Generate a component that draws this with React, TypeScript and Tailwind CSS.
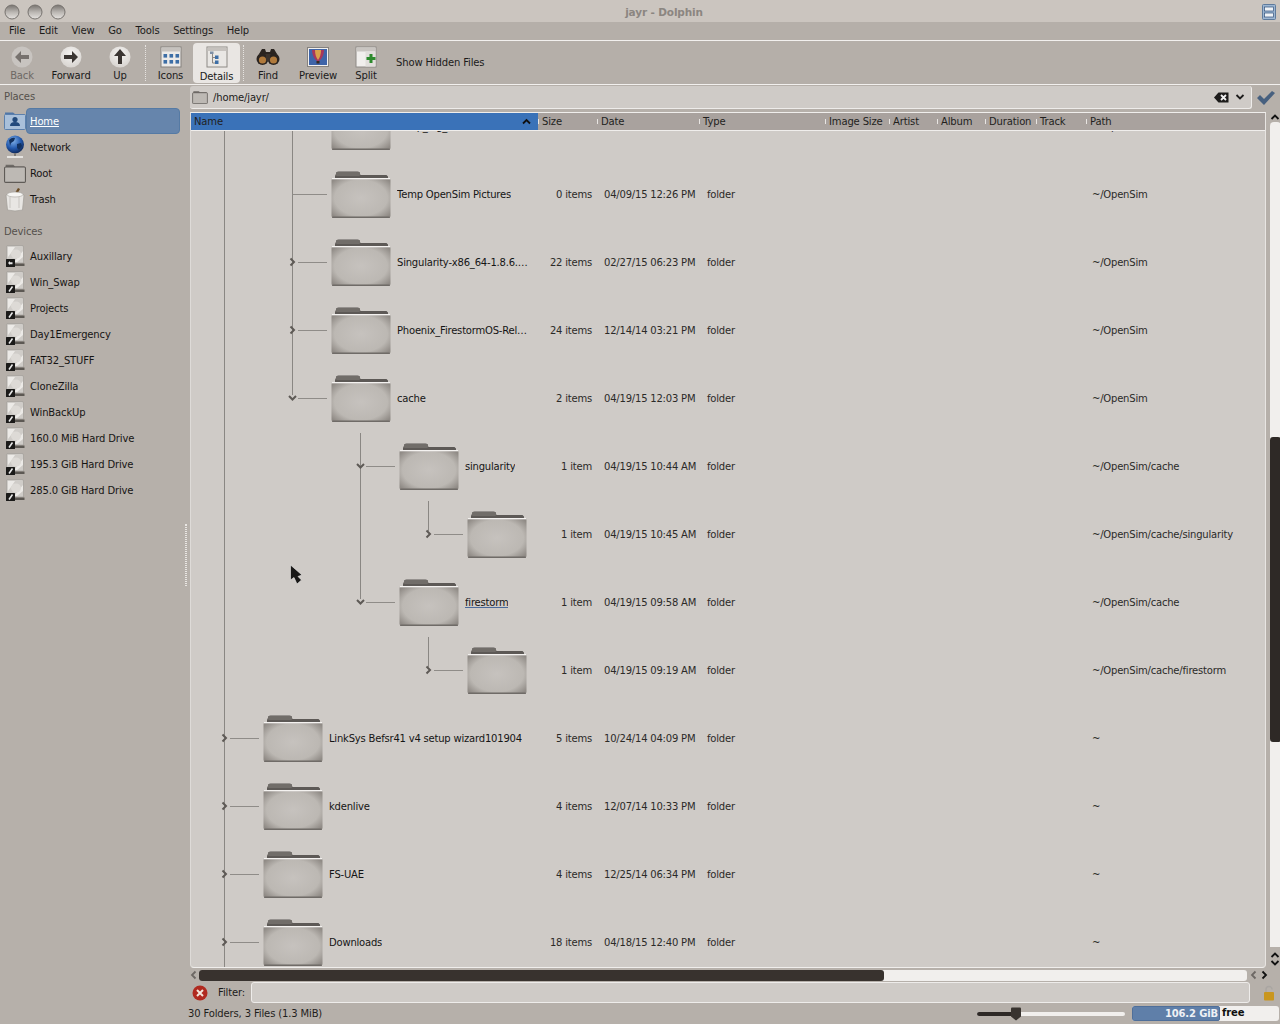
import React from "react";

type Cell = "none" | "line" | "tee" | "teeClosed" | "teeOpen" | "lastClosed" | "lastOpen";

function Chevron({ kind, x, y }: { kind: "right" | "down"; x: number; y: number }) {
  const d = kind === "right" ? `M${x - 2} ${y - 3.5}l3.5 3.5l-3.5 3.5` : `M${x - 3.5} ${y - 2}l3.5 3.5l3.5 -3.5`;
  return <path d={d} fill="none" stroke="#5e5a56" strokeWidth="2" />;
}

function TreeCell({ kind }: { kind: Cell }) {
  const full = kind === "line" || kind === "tee" || kind === "teeClosed" || kind === "teeOpen";
  const half = kind === "lastClosed" || kind === "lastOpen";
  const hasArm = kind !== "none" && kind !== "line";
  const hasChev = kind === "teeClosed" || kind === "teeOpen" || kind === "lastClosed" || kind === "lastOpen";
  const open = kind === "teeOpen" || kind === "lastOpen";
  return (
    <svg width="68" height="68" viewBox="0 0 68 68" className="shrink-0">
      {full && <line x1="33.5" y1="0" x2="33.5" y2="68" stroke="#8a8783" />}
      {half && <line x1="33.5" y1="0" x2="33.5" y2="30" stroke="#8a8783" />}
      {hasArm && <line x1={hasChev ? 39 : 33.5} y1="33.5" x2="68" y2="33.5" stroke="#8f8c88" />}
      {hasChev && <Chevron kind={open ? "down" : "right"} x={33.5} y={33} />}
    </svg>
  );
}

function Folder() {
  return (
    <svg width="60" height="48" viewBox="0 0 60 48" className="ml-[4px] shrink-0">
      <defs>
        <radialGradient id="fbody" cx="50%" cy="50%" r="64%">
          <stop offset="0" stopColor="#c6c2be" />
          <stop offset="0.7" stopColor="#bcb8b3" />
          <stop offset="1" stopColor="#908b86" />
        </radialGradient>
      </defs>
      <path d="M4 5l1.5-3.5q.5-1 2-1h19q1.5 0 2 1l1 2.5h26l1.5 1.5v4h-53z" fill="#5d5956" />
      <rect x="5" y="1" width="24" height="4" rx="1" fill="#716d69" />
      <rect x="0.5" y="7" width="59" height="40" rx="2.5" fill="url(#fbody)" />
      <rect x="1" y="7" width="58" height="1.3" fill="#f4f2f0" />
      <rect x="1" y="45.5" width="58" height="1.5" rx="0.7" fill="#6f6b67" />
    </svg>
  );
}

const rows: { cells: Cell[]; name: string; size: string; date: string; path: string; hover?: boolean }[] = [
  { cells: ["line", "tee"], name: "Temp_log_Pics", size: "3 items", date: "04/09/15 12:24 PM", path: "~/OpenSim" },
  { cells: ["line", "tee"], name: "Temp OpenSim Pictures", size: "0 items", date: "04/09/15 12:26 PM", path: "~/OpenSim" },
  { cells: ["line", "teeClosed"], name: "Singularity-x86_64-1.8.6.6157", size: "22 items", date: "02/27/15 06:23 PM", path: "~/OpenSim" },
  { cells: ["line", "teeClosed"], name: "Phoenix_FirestormOS-Releasex86", size: "24 items", date: "12/14/14 03:21 PM", path: "~/OpenSim" },
  { cells: ["line", "lastOpen"], name: "cache", size: "2 items", date: "04/19/15 12:03 PM", path: "~/OpenSim" },
  { cells: ["line", "none", "teeOpen"], name: "singularity", size: "1 item", date: "04/19/15 10:44 AM", path: "~/OpenSim/cache" },
  { cells: ["line", "none", "line", "lastClosed"], name: "", size: "1 item", date: "04/19/15 10:45 AM", path: "~/OpenSim/cache/singularity" },
  { cells: ["line", "none", "lastOpen"], name: "firestorm", size: "1 item", date: "04/19/15 09:58 AM", path: "~/OpenSim/cache", hover: true },
  { cells: ["line", "none", "none", "lastClosed"], name: "", size: "1 item", date: "04/19/15 09:19 AM", path: "~/OpenSim/cache/firestorm" },
  { cells: ["teeClosed"], name: "LinkSys Befsr41 v4 setup wizard101904", size: "5 items", date: "10/24/14 04:09 PM", path: "~" },
  { cells: ["teeClosed"], name: "kdenlive", size: "4 items", date: "12/07/14 10:33 PM", path: "~" },
  { cells: ["teeClosed"], name: "FS-UAE", size: "4 items", date: "12/25/14 06:34 PM", path: "~" },
  { cells: ["teeClosed"], name: "Downloads", size: "18 items", date: "04/18/15 12:40 PM", path: "~" },
];

function Row({ r, first }: { r: (typeof rows)[number]; first?: boolean }) {
  return (
    <div className={`flex h-[68px] shrink-0 items-center tracking-[-0.2px] text-[#2b2a28] ${first ? "-mt-[38px]" : ""}`}>
      <div className="flex h-full w-[346px] shrink-0 items-center overflow-hidden pr-[8px]">
        {r.cells.map((c, i) => (
          <TreeCell key={i} kind={c} />
        ))}
        <Folder />
        <span
          className={`ml-[6px] truncate text-[#151515] ${r.hover ? "underline decoration-[#4a6a9a]" : ""}`}
        >
          {r.name}
        </span>
      </div>
      <div className="w-[58px] shrink-0 pr-[3px] text-right">{r.size}</div>
      <div className="w-[108px] shrink-0 pl-[9px] whitespace-nowrap">{r.date}</div>
      <div className="w-[385px] shrink-0 pl-[4px]">folder</div>
      <div className="pl-[4px] whitespace-nowrap">{r.path}</div>
    </div>
  );
}

function RoundBtn({ dim, d }: { dim?: boolean; d: string }) {
  return (
    <svg width="24" height="24" viewBox="0 0 24 24">
      <defs>
        <radialGradient id="rb" cx="50%" cy="35%" r="70%">
          <stop offset="0" stopColor="#f4f3f1" />
          <stop offset="1" stopColor="#d6d2ce" />
        </radialGradient>
      </defs>
      <circle cx="12" cy="12" r="10.5" fill={dim ? "#c8c4c0" : "url(#rb)"} />
      <path d={d} fill={dim ? "#77726e" : "#3a3532"} />
    </svg>
  );
}

function IconsIcon() {
  return (
    <svg width="24" height="24" viewBox="0 0 24 24">
      <rect x="2" y="2" width="20" height="20" fill="#eceae8" stroke="#86827e" />
      <rect x="2.5" y="2.5" width="19" height="4" fill="#c6c2be" />
      {[4.5, 10.5, 16.5].map((x) =>
        [9, 15].map((y) => <rect key={`${x}${y}`} x={x} y={y} width="3.6" height="3.6" fill="#3c6ea6" />)
      )}
    </svg>
  );
}

function DetailsIcon() {
  return (
    <svg width="24" height="24" viewBox="0 0 24 24">
      <rect x="2" y="2" width="20" height="20" fill="#e9e7e4" stroke="#8e8a86" />
      <rect x="2.5" y="2.5" width="19" height="3.5" fill="#c6c2be" />
      <path d="M7.5 8v10h3M7.5 12.5h3" fill="none" stroke="#8a8682" />
      <rect x="10" y="10.5" width="3.5" height="3.5" fill="#3c6ea6" />
      <rect x="10" y="15.5" width="3.5" height="3.5" fill="#3c6ea6" />
      <rect x="5" y="6.5" width="3.5" height="2.5" fill="#7d8fa5" />
    </svg>
  );
}

function FindIcon() {
  return (
    <svg width="24" height="24" viewBox="0 0 24 24">
      <path d="M3 9l3-5h3l1 3h4l1-3h3l3 5z" fill="#2a2420" />
      <circle cx="6.5" cy="14" r="6" fill="#2a2420" />
      <circle cx="17.5" cy="14" r="6" fill="#2a2420" />
      <circle cx="6.5" cy="15" r="3.6" fill="#b07a3c" />
      <circle cx="17.5" cy="15" r="3.6" fill="#b07a3c" />
      <rect x="10" y="9" width="4" height="7" fill="#3a322c" />
    </svg>
  );
}

function PreviewIcon() {
  return (
    <svg width="22" height="20" viewBox="0 0 22 20" className="mb-[2px]">
      <rect x="0.5" y="0.5" width="21" height="19" fill="#f2f0ee" stroke="#85817d" />
      <rect x="2" y="2" width="18" height="16" fill="#3f64a8" />
      <path d="M5 3h12q0 7-5 11h-2q-5-4-5-11z" fill="#a8375c" />
      <path d="M8 3h6q0 6-3 10q-3-4-3-10z" fill="#d9a24a" />
      <rect x="9.5" y="14" width="3" height="2.5" fill="#3a2a20" />
    </svg>
  );
}

function SplitIcon() {
  return (
    <svg width="24" height="24" viewBox="0 0 24 24">
      <rect x="2" y="2" width="20" height="20" fill="#f1efed" stroke="#8e8a86" />
      <rect x="2.5" y="2.5" width="19" height="4" fill="#c9c5c1" />
      <rect x="11.5" y="6.5" width="10" height="15" fill="#e2dfdc" />
      <path d="M15.5 9h3v3h3v3h-3v3h-3v-3h-3v-3h3z" fill="#2d8a2d" />
    </svg>
  );
}

function Tool({ w, label, active, dim, children }: { w: string; label: string; active?: boolean; dim?: boolean; children: React.ReactNode }) {
  return (
    <div
      className={`flex h-[40px] shrink-0 flex-col items-center justify-start rounded-[4px] ${w} ${active ? "bg-[#e9e6e3]" : ""}`}
    >
      <div className="flex h-[26px] items-end">{children}</div>
      <div className={`leading-[13px] ${dim ? "text-[#6d6864]" : "text-[#1a1a1a]"} ${active ? "mt-[1px]" : ""}`}>{label}</div>
    </div>
  );
}

function Sep({ className }: { className: string }) {
  return <div className={`h-[36px] w-0 shrink-0 border-l border-dotted border-[#e6e3e0] ${className}`} />;
}

function Drive({ mark }: { mark: "arrow" | "slash" }) {
  return (
    <svg width="22" height="24" viewBox="0 0 22 24">
      <path d="M4 1.5h14q1.5 0 1.5 1.5v16h-17V3q0-1.5 1.5-1.5z" fill="#cfccc8" stroke="#9c9893" strokeWidth="0.6" />
      <path d="M4 3l7 0l-4 6l-3 4zM19 7l0 6l-6 5l-3 0z" fill="#eceae7" />
      <ellipse cx="12" cy="10" rx="5" ry="4.5" fill="#dddad6" />
      <path d="M2 19.5h18.5v2.5H2z" fill="#5c5853" />
      <rect x="2" y="15" width="9" height="8" rx="0.5" fill="#1b1a19" />
      {mark === "arrow" ? (
        <path d="M4 19l2-2v1.2h2.5v2H6V21z" fill="#e8e8e8" />
      ) : (
        <path d="M5 21.5l3.5-5" stroke="#e8e8e8" strokeWidth="1.6" />
      )}
    </svg>
  );
}

function SmallFolder({ w = 20, h = 18 }: { w?: number; h?: number }) {
  return (
    <svg width={w} height={h} viewBox="0 0 20 18">
      <path d="M1.5 3V1.5h7L10 3h8.5v3h-17z" fill="#6e6a66" />
      <rect x="0.5" y="3.5" width="19" height="14" rx="1" fill="#bdb9b4" stroke="#5f5b57" />
    </svg>
  );
}

function HomeIcon() {
  return (
    <svg width="22" height="20" viewBox="0 0 22 20">
      <path d="M1 3V1.5h8L11 3h10v4H1z" fill="#4f76a8" />
      <rect x="0.5" y="3.5" width="21" height="15" rx="1" fill="#a9c0da" stroke="#5c80ac" />
      <circle cx="11" cy="8.5" r="2.6" fill="#234a7c" />
      <path d="M6 15q0-4 5-4t5 4z" fill="#234a7c" />
    </svg>
  );
}

function GlobeIcon() {
  return (
    <svg width="20" height="24" viewBox="0 0 20 24">
      <defs>
        <radialGradient id="gl" cx="40%" cy="30%" r="70%">
          <stop offset="0" stopColor="#7fb0e8" />
          <stop offset="0.6" stopColor="#2359ad" />
          <stop offset="1" stopColor="#102a5c" />
        </radialGradient>
      </defs>
      <circle cx="10" cy="9.5" r="9" fill="url(#gl)" />
      <path d="M4 5q3-3 6-2l-1 3l-3 2l-1 3zM12 9l4-1l1 3l-3 4l-2-2z" fill="#12315f" />
      <rect x="9" y="18" width="2" height="3" fill="#7f7b77" />
      <rect x="2" y="21" width="16" height="2" fill="#e5e3e0" />
    </svg>
  );
}

function TrashIcon() {
  return (
    <svg width="20" height="26" viewBox="0 0 20 26">
      <path d="M8 10L13 2l2 1l-4 7z" fill="#6a4a22" />
      <path d="M1 9q9-4 18 0l-1.5 15q-7.5 2-15 0z" fill="#e8e6e3" stroke="#a09c97" strokeWidth="0.7" />
      <path d="M5 11v11M14 11v11" stroke="#c8c5c1" />
      <ellipse cx="10" cy="8.5" rx="8" ry="2.5" fill="#f6f5f3" stroke="#a5a19c" strokeWidth="0.6" />
    </svg>
  );
}

function PlaceRow({ icon, label, active }: { icon: React.ReactNode; label: string; active?: boolean }) {
  return (
    <div className="flex h-[26px] items-center pl-[4px]">
      <div className="flex w-[22px] shrink-0 items-center justify-center">{icon}</div>
      <div
        className={`flex h-[26px] w-[154px] items-center pt-[1px] ${
          active ? "rounded-[4px] border border-[#557aa4] bg-[#6685ac] pl-[3px] text-white underline" : "pl-[4px] text-[#161514]"
        }`}
      >
        {label}
      </div>
    </div>
  );
}

const places = [
  { label: "Home", icon: <HomeIcon />, active: true },
  { label: "Network", icon: <GlobeIcon /> },
  { label: "Root", icon: <SmallFolder w={22} h={20} /> },
  { label: "Trash", icon: <TrashIcon /> },
];
const devices: [string, "arrow" | "slash"][] = [
  ["Auxillary", "arrow"],
  ["Win_Swap", "slash"],
  ["Projects", "slash"],
  ["Day1Emergency", "slash"],
  ["FAT32_STUFF", "slash"],
  ["CloneZilla", "slash"],
  ["WinBackUp", "slash"],
  ["160.0 MiB Hard Drive", "slash"],
  ["195.3 GiB Hard Drive", "slash"],
  ["285.0 GiB Hard Drive", "slash"],
];

const cols: [string, string][] = [
  ["Size", "w-[59px]"],
  ["Date", "w-[102px]"],
  ["Type", "w-[126px]"],
  ["Image Size", "w-[64px]"],
  ["Artist", "w-[48px]"],
  ["Album", "w-[48px]"],
  ["Duration", "w-[51px]"],
  ["Track", "w-[50px]"],
  ["Path", "flex-1"],
];

function WinBtn() {
  return (
    <svg width="16" height="16" viewBox="0 0 16 16">
      <defs>
        <linearGradient id="wb" x1="0" y1="0" x2="0" y2="1">
          <stop offset="0" stopColor="#77736f" />
          <stop offset="0.5" stopColor="#b9b5b1" />
          <stop offset="1" stopColor="#e6e3e0" />
        </linearGradient>
      </defs>
      <circle cx="8" cy="8" r="7" fill="url(#wb)" stroke="#76726e" />
    </svg>
  );
}

export default function App() {
  return (
    <div
      className="relative flex h-[1024px] w-[1280px] flex-col overflow-hidden bg-[#b6b0aa] text-[10px] leading-[14px] tracking-[-0.14px] text-[#1c1b1a]"
      style={{ fontFamily: '"DejaVu Sans", sans-serif' }}
    >
      {/* title bar */}
      <div className="flex h-[22px] shrink-0 items-center bg-[#cbc5bf] pt-[2px] pl-[4px]">
        <div className="flex w-[66px] gap-[7px]">
          <WinBtn />
          <WinBtn />
          <WinBtn />
        </div>
        <div className="flex-1 text-center text-[10.5px] font-bold text-[#8b8681]">jayr - Dolphin</div>
        <div className="flex w-[22px] justify-center">
          <svg width="14" height="16" viewBox="0 0 14 16">
            <rect x="0.5" y="0.5" width="13" height="15" rx="1" fill="#9db6d2" stroke="#5d7a9c" />
            <rect x="2.5" y="3" width="9" height="4" fill="#eef2f6" stroke="#2f4f78" strokeWidth="0.7" />
            <rect x="2.5" y="9" width="9" height="4" fill="#eef2f6" stroke="#2f4f78" strokeWidth="0.7" />
          </svg>
        </div>
      </div>
      {/* menu */}
      <div className="flex h-[18px] shrink-0 items-center gap-[13.7px] bg-[#b5afa9] pl-[9px] text-[#1c1b1a]">
        {["File", "Edit", "View", "Go", "Tools", "Settings", "Help"].map((m) => (
          <span key={m}>{m}</span>
        ))}
      </div>
      {/* toolbar */}
      <div className="flex h-[45px] shrink-0 items-center border-y border-[#f2f0ee] bg-[#b5afa9] pt-[1px]">
        <Tool w="w-[44px]" label="Back" dim>
          <RoundBtn dim d="M5 12l6-6v4h8v4h-8v4z" />
        </Tool>
        <Tool w="w-[54px]" label="Forward">
          <RoundBtn d="M19 12l-6-6v4H5v4h8v4z" />
        </Tool>
        <Tool w="w-[44px]" label="Up">
          <RoundBtn d="M12 4l6 7h-4v8h-4v-8H6z" />
        </Tool>
        <Sep className="ml-[3px] mr-[2px]" />
        <Tool w="w-[45px]" label="Icons">
          <IconsIcon />
        </Tool>
        <Tool w="w-[47px]" label="Details" active>
          <DetailsIcon />
        </Tool>
        <Sep className="ml-[3px] mr-[4px]" />
        <Tool w="w-[40px]" label="Find">
          <FindIcon />
        </Tool>
        <Tool w="w-[60px]" label="Preview">
          <PreviewIcon />
        </Tool>
        <Tool w="w-[36px]" label="Split">
          <SplitIcon />
        </Tool>
        <div className="ml-[12px]">Show Hidden Files</div>
      </div>
      {/* main */}
      <div className="flex min-h-0 flex-1">
        <div className="w-[184px] shrink-0">
          <div className="flex h-[23px] items-center pl-[4px] text-[#55504c]">Places</div>
          {places.map((p) => (
            <PlaceRow key={p.label} {...p} />
          ))}
          <div className="mt-[8px] flex h-[23px] items-center pl-[4px] text-[#55504c]">Devices</div>
          {devices.map(([label, mark]) => (
            <PlaceRow key={label} label={label} icon={<Drive mark={mark} />} />
          ))}
        </div>
        <div className="flex w-[4px] shrink-0 items-center justify-center">
          <div className="h-[62px] w-[2px] border-x border-dotted border-[#e9e6e3]" />
        </div>
        <div className="flex min-w-0 flex-1 flex-col">
          {/* location */}
          <div className="flex h-[25px] shrink-0 items-center pl-[2px]">
            <div className="flex h-[23px] w-[1062px] items-center rounded-[3px] border-r border-b border-[#eeecea] bg-[#cfcbc7] pl-[2px] pr-[6px]">
              <SmallFolder w={16} h={14} />
              <span className="ml-[5px] flex-1 pt-[1px]">/home/jayr/</span>
              <svg width="15" height="11" viewBox="0 0 15 11">
                <path d="M0 5.5L4.5 0.5H14.5V10.5H4.5z" fill="#1d1c1b" />
                <path d="M7 3l5 5M12 3l-5 5" stroke="#f0f0f0" strokeWidth="1.8" />
              </svg>
              <svg width="10" height="8" viewBox="0 0 10 8" className="ml-[6px]">
                <path d="M1.5 2L5 5.5L8.5 2" fill="none" stroke="#1d1c1b" strokeWidth="1.8" />
              </svg>
            </div>
            <svg width="20" height="16" viewBox="0 0 20 16" className="ml-[4px]">
              <path d="M1 8l3-3l4 4l8-8l3 2l-11 12z" fill="#47607f" />
            </svg>
          </div>
          {/* view */}
          <div className="flex min-h-0 flex-1 pt-[2px]">
            <div className="ml-[2px] flex w-[1076px] shrink-0 flex-col overflow-hidden rounded-b-[4px] border border-t-[#f0eeec] border-r-[#e8e5e2] border-b-[#f0eeec] border-l-[#dedbd8] bg-[#cfcbc7]">
              <div className="flex h-[18px] shrink-0 items-center border-b border-[#f0eeec] bg-[#a9a29e] text-[#221f1d]">
                <div className="relative flex h-full w-[347px] shrink-0 items-center bg-[#3a72b8] pl-[3px]">
                  Name
                  <svg width="9" height="7" viewBox="0 0 9 7" className="absolute right-[7px] top-[5px]">
                    <path d="M1 5.5L4.5 2L8 5.5" fill="none" stroke="#101010" strokeWidth="1.8" />
                  </svg>
                </div>
                {cols.map(([c, w]) => (
                  <div key={c} className={`flex h-full items-center whitespace-nowrap ${w}`}>
                    <div className="mr-[3px] h-[5px] w-px bg-[#e8e5e2]" />
                    {c}
                  </div>
                ))}
              </div>
              <div className="flex min-h-0 flex-1 flex-col overflow-hidden">
                {rows.map((r, i) => (
                  <Row key={i} r={r} first={i === 0} />
                ))}
              </div>
            </div>
            <div className="ml-[3px] flex w-[12px] shrink-0 flex-col items-center">
              <svg width="10" height="8" viewBox="0 0 10 8" className="mt-[1px] shrink-0">
                <path d="M1.5 6L5 2.5L8.5 6" fill="none" stroke="#111" strokeWidth="1.8" />
              </svg>
              <div className="mt-[1px] h-[825px] w-[11px] shrink-0 rounded-t-[4px] bg-[#f1efed]">
                <div className="mt-[315px] h-[305px] rounded-[3px] bg-[#2e2926]" />
              </div>
              <svg width="10" height="8" viewBox="0 0 10 8" className="mt-[4px] shrink-0">
                <path d="M1.5 6L5 2.5L8.5 6" fill="none" stroke="#111" strokeWidth="1.8" />
              </svg>
              <svg width="10" height="8" viewBox="0 0 10 8" className="shrink-0">
                <path d="M1.5 2L5 5.5L8.5 2" fill="none" stroke="#111" strokeWidth="1.8" />
              </svg>
            </div>
          </div>
          {/* hscroll */}
          <div className="flex h-[14px] shrink-0 items-center pl-[2px]">
            <svg width="8" height="10" viewBox="0 0 8 10" className="shrink-0">
              <path d="M5.5 1.5L2 5L5.5 8.5" fill="none" stroke="#6d6864" strokeWidth="1.8" />
            </svg>
            <div className="ml-[1px] h-[11px] w-[1048px] shrink-0 rounded-[3px] bg-[#f1efed]">
              <div className="h-full w-[685px] rounded-[3px] bg-[#38322e]" />
            </div>
            <svg width="8" height="10" viewBox="0 0 8 10" className="ml-[3px] shrink-0">
              <path d="M5.5 1.5L2 5L5.5 8.5" fill="none" stroke="#6d6864" strokeWidth="1.8" />
            </svg>
            <svg width="8" height="10" viewBox="0 0 8 10" className="ml-[2px] shrink-0">
              <path d="M2.5 1.5L6 5L2.5 8.5" fill="none" stroke="#111" strokeWidth="1.8" />
            </svg>
          </div>
          {/* filter */}
          <div className="flex h-[21px] shrink-0 items-center pl-[4px]">
            <svg width="16" height="16" viewBox="0 0 16 16" className="shrink-0">
              <circle cx="8" cy="8" r="7.5" fill="#b02a20" />
              <path d="M5 5l6 6M11 5l-6 6" stroke="#f4e6dc" strokeWidth="2" />
            </svg>
            <span className="ml-[10px] w-[33px] shrink-0">Filter:</span>
            <div className="h-[21px] w-[999px] shrink-0 rounded-[3px] border border-[#eeecea] bg-[#cfcbc7]" />
            <svg width="12" height="16" viewBox="0 0 12 16" className="ml-[13px] shrink-0">
              <path d="M3 8V4.5a3 3 0 0 1 6 0" fill="none" stroke="#aaa6a2" strokeWidth="1.4" />
              <rect x="1" y="7" width="10" height="8.5" rx="1" fill="#c9961e" />
            </svg>
          </div>
          {/* status */}
          <div className="flex h-[21px] shrink-0 items-center pr-[1px]">
            <span className="text-[#1f1e1c]">30 Folders, 3 Files (1.3 MiB)</span>
            <div className="flex-1" />
            <div className="relative h-[4px] w-[148px] rounded-[2px] bg-[#f1efed]">
              <div className="h-full w-[39px] rounded-[2px] bg-[#2e2926]" />
              <svg width="12" height="14" viewBox="0 0 12 14" className="absolute -top-[5px] left-[33px]">
                <path d="M1 1.5Q1 0.5 2 0.5H10Q11 0.5 11 1.5V9.5L6 13.5L1 9.5z" fill="#38332f" />
              </svg>
            </div>
            <div className="ml-[7px] flex h-[15px] w-[147px] overflow-hidden rounded-[3px] bg-[#f1efed] font-bold">
              <div className="flex w-[88px] items-center justify-end rounded-[2px] border border-[#4f6f9a] bg-[#5f7fa9] pr-px text-[#eef1f5]">
                106.2 GiB
              </div>
              <span className="ml-[2px] text-[#0f0f0f]">free</span>
            </div>
          </div>
        </div>
      </div>
      {/* mouse pointer */}
      <svg width="14" height="22" viewBox="0 0 14 22" className="absolute left-[289px] top-[564px]">
        <path d="M1.5 1L1.5 16L5 13.5L8 20L12.5 16L9 12.5L13 11z" fill="#191817" stroke="#efedeb" strokeWidth="0.6" />
      </svg>
    </div>
  );
}
